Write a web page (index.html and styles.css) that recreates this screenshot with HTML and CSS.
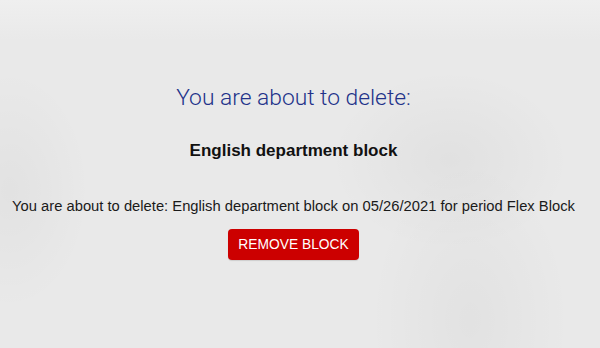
FILE: index.html
```html
<!DOCTYPE html>
<html lang="en">
<head>
<meta charset="utf-8">
<title>Remove block</title>
<link rel="stylesheet" href="styles.css">
</head>
<body>
<main class="dialog">
  <h1 class="dialog-title">You are about to delete:</h1>
  <h2 class="dialog-name">English department block</h2>
  <p class="dialog-message">You are about to delete: English department block on 05/26/2021 for period Flex Block</p>
  <button class="btn-remove" type="button">REMOVE BLOCK</button>
</main>
</body>
</html>
```

FILE: styles.css
```css
html, body {
  margin: 0;
  padding: 0;
  height: 100%;
}

body {
  background-color: #e9e9e9;
  background-image:
    radial-gradient(ellipse 120px 90px at 450px 160px, rgba(0,0,0,0.035), transparent),
    radial-gradient(ellipse 100px 160px at 470px 320px, rgba(0,0,0,0.03), transparent),
    radial-gradient(ellipse 80px 120px at 10px 190px, rgba(0,0,0,0.03), transparent),
    linear-gradient(#efefef, #e9e9e9 40px);
  font-family: "Liberation Sans", Arial, sans-serif;
  color: #1a1a1a;
}

.dialog {
  display: flex;
  flex-direction: column;
  align-items: center;
  text-align: center;
  padding: 85px 13px 0 0;
}

.dialog-title {
  margin: 0;
  font-family: Roboto, "Liberation Sans", sans-serif;
  font-weight: 300;
  font-size: 22.8px;
  line-height: 26px;
  color: #22328a;
}

.dialog-name {
  margin: 30px 0 0;
  font-size: 17px;
  font-weight: bold;
  line-height: 20px;
  color: #111;
}

.dialog-message {
  margin: 36px 0 0;
  font-size: 14.75px;
  line-height: 18px;
  color: #1a1a1a;
}

.btn-remove {
  margin-top: 14px;
  width: 131px;
  height: 31px;
  padding: 0;
  border: none;
  border-radius: 4px;
  background: #cc0000;
  color: #fff;
  font-family: "Liberation Sans", Arial, sans-serif;
  font-size: 13.8px;
  line-height: 31px;
  box-shadow: 0 1px 1px rgba(0,0,0,0.12);
}
```
